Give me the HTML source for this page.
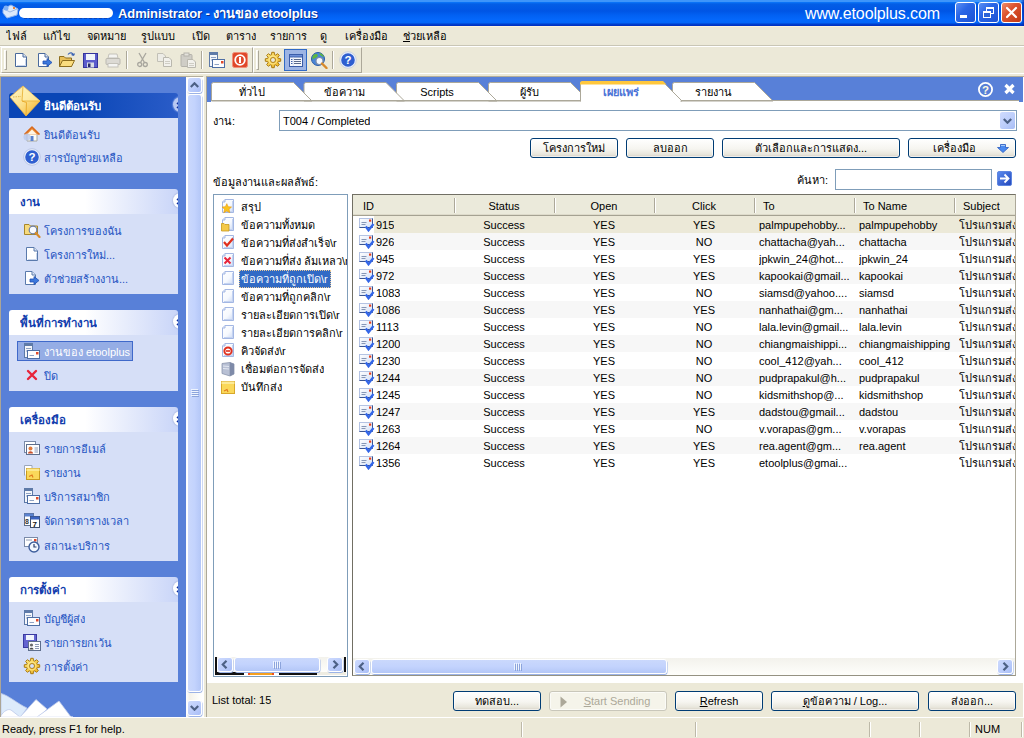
<!DOCTYPE html>
<html lang="th"><head><meta charset="utf-8"><title>Administrator - งานของ etoolplus</title>
<style>
html,body{margin:0;padding:0;}
body{width:1024px;height:738px;overflow:hidden;position:relative;background:#fff;font-family:"Liberation Sans",sans-serif;font-size:11px;color:#000;line-height:13px;}
div,span,svg{position:absolute;box-sizing:border-box;}
.t{white-space:nowrap;line-height:14px;height:14px;overflow-x:clip;overflow-y:visible;}
/* title */
#title{left:0;top:0;width:1024px;height:26px;background:linear-gradient(to bottom,#3E95FA 0,#3E95FA 1.5px,#0A72F6 2.5px,#045EE6 4px,#0055E5 11px,#0260F2 15px,#0468FC 20px,#0366F8 22.5px,#0150DE 23.6px,#0036C6 24.8px,#0030C0 26px);}
#title .cap{left:118px;top:6px;font-size:13px;font-weight:bold;color:#fff;line-height:16px;height:16px;white-space:nowrap;text-shadow:1px 1px 0 #0A2F8F;letter-spacing:-0.1px;}
#title .url{left:805px;top:4px;font-size:16px;color:#fff;line-height:19px;height:19px;white-space:nowrap;letter-spacing:-0.12px;}
.tb{top:2px;width:21px;height:21px;border:1px solid #fff;border-radius:3px;background:linear-gradient(135deg,#5C90F4 0,#2A66E6 40%,#1C52D4 100%);}
.tb.x{background:linear-gradient(135deg,#EE8E6C 0,#DC5430 40%,#C23A16 100%);}
/* menu */
#menu{left:0;top:26px;width:1024px;height:20px;background:#ECE9D8;border-top:1px solid #FBF3DD;}
#menu .t{top:2px;}
/* toolbar */
#tool{left:0;top:45px;width:1024px;height:32px;background:#ECE9D8;}
.sep{width:2px;height:18px;top:6px;border-left:1px solid #ACA899;border-right:1px solid #fff;}
.grip{width:3px;height:20px;top:5px;border-left:1px solid #fff;border-top:1px solid #fff;border-right:1px solid #ACA899;border-bottom:1px solid #ACA899;background:#F6F4EC;}
/* sidebar */
#side{left:0;top:77px;width:186px;height:640px;background:#5880D8;overflow:hidden;}
.ph{left:9px;width:169px;height:25px;background:linear-gradient(to right,#fff 0,#fff 45%,#C9D5F8 100%);border-radius:3px 3px 0 0;overflow:hidden;}
.ph .t{max-width:118px;left:11px;top:6px;font-weight:bold;color:#123DAD;font-size:11.5px;}
.pb{left:9px;width:169px;background:#D6DFF7;}
.lk{color:#1E54C2;left:35px;max-width:130px;}
.tr{}
.chev{left:164px;top:4px;width:15px;height:15px;border-radius:8px;background:#fff;box-shadow:0 0 1px 1px #B8C4E8;}
/* scroll */
.sbtn{width:15px;height:16px;border:1px solid #fff;border-radius:3px;background:linear-gradient(135deg,#CDDAFE 0,#BCCDFB 55%,#A8BDF6 100%);box-shadow:.5px 1px 0 0 #9CB3E6;}
.sbtnh{width:16px;height:15px;border:1px solid #fff;border-radius:3px;background:linear-gradient(135deg,#CDDAFE 0,#BCCDFB 55%,#A8BDF6 100%);box-shadow:.5px 1px 0 0 #9CB3E6;}
.sth{border:1px solid #fff;border-radius:3px;box-shadow:.5px 1px 0 0 #9CB3E6;}
/* main */
#main{left:207px;top:77px;width:817px;height:640px;background:#fff;overflow:hidden;}
.btn{height:20px;border:1px solid #003C74;border-radius:3px;background:linear-gradient(to bottom,#fff 0,#F6F5F0 55%,#E8E6DC 85%,#D6D0C5 100%);text-align:center;line-height:18px;white-space:nowrap;overflow:hidden;box-shadow:inset 0 0 0 1px rgba(255,255,255,.6);}
.btn.dis{border-color:#C9C7BA;background:#F5F4EA;color:#ACA899;}
.inp{border:1px solid #7F9DB9;background:#fff;}
.row{left:0;width:662px;height:17px;}
.row .c{top:2px;line-height:14px;height:14px;white-space:nowrap;overflow:hidden;}
.hd{top:0;height:21px;border-bottom:1px solid #A5A292;box-shadow:inset 0 -1px 0 #DEDBCB;}
.hs{top:3px;width:2px;height:15px;border-left:1px solid #ACA899;border-right:1px solid #fff;}
/* status */
#status{left:0;top:717px;width:1024px;height:21px;background:#ECE9D8;border-top:1px solid #fff;}
.ss{top:4px;width:2px;height:15px;border-left:1px solid #BDB9A8;border-right:1px solid #fff;}
</style></head>
<body>
<div id="title">
 <svg style="left:2px;top:4px" width="17" height="15" viewBox="0 0 17 15">
  <path d="M1 5 L9 1 L16 5 L15 11 L5 14 L1 9 Z" fill="#DCE9FB" stroke="#8FB4EE" stroke-width="1"/>
  <path d="M2 5 L8 8 L15 5" fill="none" stroke="#9CB8E6" stroke-width="1"/>
  <circle cx="4" cy="4" r="2.5" fill="#7FB0F5"/><rect x="11" y="3" width="2" height="2" fill="#E8833A"/>
 </svg>
 <div style="left:19px;top:8px;width:94px;height:10px;background:#fff;border-radius:5px"></div>
 <div style="left:24px;top:18px;width:86px;height:1px;background:repeating-linear-gradient(to right,#143A9A 0,#143A9A 3px,#0A5AE6 3px,#0A5AE6 5px);opacity:.7"></div>
 <div class="cap">Administrator - งานของ etoolplus</div>
 <div class="url">www.etoolplus.com</div>
 <div class="tb" style="left:955px"><div style="left:4px;top:12px;width:7px;height:3px;background:#fff"></div></div>
 <div class="tb" style="left:978px">
  <div style="left:7px;top:4px;width:8px;height:7px;border:1px solid #fff;border-top-width:2px"></div>
  <div style="left:4px;top:8px;width:8px;height:7px;border:1px solid #fff;border-top-width:2px;background:#2B63D8"></div>
 </div>
 <div style="left:1021px;top:0;width:3px;height:26px;background:linear-gradient(to right,rgba(0,40,170,0),rgba(0,40,170,.75))"></div>
 <div class="tb x" style="left:1001px"><svg style="left:0;top:0" width="19" height="19" viewBox="0 0 19 19"><path d="M5 5 L14 14 M14 5 L5 14" stroke="#fff" stroke-width="2.2" stroke-linecap="round"/></svg></div>
</div>
<div id="menu">
 <div class="t" style="left:6px;max-width:32px">ไฟล์</div>
 <div class="t" style="left:43px;max-width:39px">แก้ไข</div>
 <div class="t" style="left:87px;max-width:49px">จดหมาย</div>
 <div class="t" style="left:141px;max-width:46px">รูปแบบ</div>
 <div class="t" style="left:192px;max-width:29px">เปิด</div>
 <div class="t" style="left:226px;max-width:39px">ตาราง</div>
 <div class="t" style="left:270px;max-width:45px">รายการ</div>
 <div class="t" style="left:320px;max-width:20px">ดู</div>
 <div class="t" style="left:345px;max-width:53px">เครื่องมือ</div>
 <div class="t" style="left:403px;max-width:62px"><u>ช่</u>วยเหลือ</div>
</div>
<div id="tool">
 <div style="left:0;top:0;width:1024px;height:1px;background:#C9C6B6"></div>
 <div style="left:0;top:1px;width:1024px;height:1px;background:#fff"></div>
 <div style="left:1px;top:2px;width:252px;height:26px;border:1px solid #fff;border-right-color:#ACA899;border-bottom-color:#ACA899"></div>
 <div style="left:253px;top:2px;width:109px;height:26px;border:1px solid #fff;border-right-color:#ACA899;border-bottom-color:#ACA899"></div>
 <div style="left:0;top:28px;width:1024px;height:1px;background:#fff"></div>
 <div style="left:0;top:31px;width:203px;height:1px;background:#B4AE9B"></div><div style="left:206px;top:31px;width:818px;height:1px;background:#B4AE9B"></div>
 <div class="grip" style="left:4px"></div>
 <div class="grip" style="left:256px"></div>
 <!-- new -->
 <svg style="left:13px;top:7px" width="16" height="16" viewBox="0 0 16 16"><path d="M2.5 1.5 H10 L13.5 5 V14.5 H2.5 Z" fill="#fff" stroke="#4A6A9C"/><path d="M10 1.5 V5 H13.5" fill="#DDE6F5" stroke="#4A6A9C"/><path d="M4 13.5 H12.5 V7" fill="none" stroke="#C9D6EC"/></svg>
 <!-- new wizard -->
 <svg style="left:36px;top:7px" width="17" height="16" viewBox="0 0 17 16"><path d="M2.5 1.5 H9 L12.5 5 V14.5 H2.5 Z" fill="#fff" stroke="#4A6A9C"/><path d="M9 1.5 V5 H12.5" fill="#DDE6F5" stroke="#4A6A9C"/><path d="M7 9 H11 V6.5 L16 10.5 L11 14.5 V12 H7 Z" fill="#3C78DC" stroke="#1E4FB4" stroke-width=".8"/></svg>
 <!-- open -->
 <svg style="left:58px;top:6px" width="18" height="17" viewBox="0 0 18 17"><path d="M1.5 15.5 V5.5 H6 L7.5 7 H13.5 V15.5 Z" fill="#E8C05A" stroke="#8E6E1E"/><path d="M1.5 15.5 L4.5 9.5 H16.5 L13.5 15.5 Z" fill="#FBDD7E" stroke="#8E6E1E"/><path d="M10 3.5 C12 1,15 1.5,15.5 4.5 M15.5 4.5 L13.5 3.5 M15.5 4.5 L16.5 2.5" fill="none" stroke="#3C64B4" stroke-width="1.2"/></svg>
 <!-- save -->
 <svg style="left:83px;top:8px" width="15" height="15" viewBox="0 0 15 15"><rect x=".5" y=".5" width="14" height="14" fill="#5C5CCC" stroke="#34349C"/><rect x="3" y="1" width="9" height="6" fill="#F0F4FB"/><rect x="4" y="9.5" width="7" height="5" fill="#D8DCE6"/><rect x="5" y="10.5" width="2.5" height="3.5" fill="#2A2A6C"/></svg>
 <!-- print (disabled look) -->
 <svg style="left:105px;top:8px" width="16" height="15" viewBox="0 0 16 15"><path d="M4 1 H12 L13 5 H3 Z" fill="#F4F4F2" stroke="#C4C2BA"/><rect x="1" y="5.5" width="14" height="6" rx="1" fill="#DCDAD4" stroke="#BAB8B0"/><rect x="3" y="10.5" width="10" height="3.5" fill="#F4F4F2" stroke="#C4C2BA"/></svg>
 <div class="sep" style="left:126px"></div>
 <!-- cut -->
 <svg style="left:137px;top:7px" width="11" height="16" viewBox="0 0 11 16"><path d="M2 1 L7.5 10.5 M9 1 L3.5 10.5" stroke="#A8A69E" stroke-width="1.3" fill="none"/><circle cx="2.7" cy="12.5" r="2" fill="none" stroke="#A8A69E" stroke-width="1.3"/><circle cx="8.3" cy="12.5" r="2" fill="none" stroke="#A8A69E" stroke-width="1.3"/></svg>
 <!-- copy -->
 <svg style="left:156px;top:8px" width="17" height="14" viewBox="0 0 17 14"><path d="M1.5 .5 H7 L9.5 3 V8.5 H1.5 Z" fill="#EDECE6" stroke="#C2C0B6"/><path d="M7.5 4.5 H13 L15.5 7 V13.5 H7.5 Z" fill="#F2F1EC" stroke="#BAB8AE"/><path d="M9 8.5 H14 M9 10.5 H14" stroke="#CFCDC4"/></svg>
 <!-- paste -->
 <svg style="left:180px;top:7px" width="17" height="16" viewBox="0 0 17 16"><rect x="1" y="2.5" width="11" height="12" rx="1" fill="#CFCDC6" stroke="#B4B2AA"/><rect x="4" y="1" width="5" height="3" fill="#E4E2DC" stroke="#B4B2AA"/><path d="M7.5 7.5 H13 L15.5 10 V15.5 H7.5 Z" fill="#F2F1EC" stroke="#BAB8AE"/><path d="M9 11.5 H14 M9 13.5 H14" stroke="#CFCDC4"/></svg>
 <div class="sep" style="left:201px"></div>
 <!-- mail server -->
 <svg style="left:208px;top:6px" width="18" height="18" viewBox="0 0 18 18"><rect x="1.5" y="1.5" width="8" height="14" fill="#F4F6FA" stroke="#5E7AA8"/><rect x="1.5" y="1.5" width="8" height="2.5" fill="#5E7AA8"/><path d="M3 6.5 H8 M3 9 H8" stroke="#8EA2C4"/><rect x="4.500" y="8.500" width="12" height="8" fill="#FDFDFE" stroke="#4E6EA4"/><path d="M6.5 13.500 H11" stroke="#8EA2C4"/><rect x="13" y="10" width="2.500" height="2.500" fill="#E04A2A"/></svg>
 <!-- stop -->
 <svg style="left:232px;top:7px" width="16" height="16" viewBox="0 0 16 16"><rect x=".5" y=".5" width="15" height="15" rx="2" fill="#E0482A" stroke="#F0907A"/><circle cx="8" cy="8" r="4.800" fill="none" stroke="#fff" stroke-width="1.800"/><rect x="7" y="5" width="2" height="6" fill="#fff"/></svg>
 <!-- gear -->
 <svg style="left:264px;top:6px" width="18" height="18" viewBox="-9 -9 18 18"><defs><linearGradient id="gg" x1="0" y1="0" x2="1" y2="1"><stop offset="0" stop-color="#FFEE88"/><stop offset="1" stop-color="#EDB01C"/></linearGradient></defs><path d="M-1.44 -5.41 L-1.24 -7.70 L1.24 -7.70 L1.44 -5.41 L2.81 -4.84 L4.57 -6.32 L6.32 -4.57 L4.84 -2.81 L5.41 -1.44 L7.70 -1.24 L7.70 1.24 L5.41 1.44 L4.84 2.81 L6.32 4.57 L4.57 6.32 L2.81 4.84 L1.44 5.41 L1.24 7.70 L-1.24 7.70 L-1.44 5.41 L-2.81 4.84 L-4.57 6.32 L-6.32 4.57 L-4.84 2.81 L-5.41 1.44 L-7.70 1.24 L-7.70 -1.24 L-5.41 -1.44 L-4.84 -2.81 L-6.32 -4.57 L-4.57 -6.32 L-2.81 -4.84 Z" fill="url(#gg)" stroke="#A9780E" stroke-width="1" stroke-linejoin="round"/><circle r="2.500" fill="#ECE9D8" stroke="#A9780E" stroke-width=".9"/><circle r="4" fill="none" stroke="#FFF4B0" stroke-width=".8" opacity=".7"/></svg>
 <!-- list (checked) -->
 <div style="left:284px;top:4px;width:23px;height:22px;border:1px solid #316AC5;background:#9DB4E4"></div>
 <svg style="left:289px;top:9px" width="14" height="13" viewBox="0 0 14 13"><rect x=".5" y=".5" width="13" height="12" fill="#F6F8FD" stroke="#3A5CA8"/><rect x=".5" y=".5" width="13" height="2.500" fill="#6E8FD8" stroke="#3A5CA8"/><path d="M5 5.500 H12 M5 7.500 H12 M5 9.500 H12" stroke="#5A6A8C"/><path d="M2 5.500 H3.500 M2 7.500 H3.500 M2 9.500 H3.500" stroke="#3A5CA8"/><path d="M4.250 3 V12" stroke="#C4D0EA" stroke-width=".6"/></svg>
 <!-- globe search -->
 <svg style="left:310px;top:6px" width="18" height="18" viewBox="0 0 18 18"><circle cx="8" cy="8" r="6.500" fill="#4A86D8" stroke="#2A5CA8"/><path d="M4 3.500 C7 2,9 4,7 6 C5 8,3 7,2.500 9 C2 6,3 4.500,4 3.500 Z M9 2 C12 2.500,13.500 4,14 6 C12 5,10 5,9 2 Z" fill="#5EB83E"/><circle cx="9.500" cy="10" r="3.500" fill="#F4F8FE" stroke="#7A8CA8" stroke-width="1.200"/><path d="M12 12.500 L16.500 17" stroke="#D88A2A" stroke-width="2.400" stroke-linecap="round"/></svg>
 <div class="sep" style="left:332px"></div>
 <!-- help -->
 <svg style="left:339px;top:6px" width="18" height="18" viewBox="0 0 18 18"><circle cx="9" cy="9" r="7.500" fill="#2F5FD0" stroke="#E8EEFA" stroke-width="1.400"/><circle cx="9" cy="9" r="8.300" fill="none" stroke="#B8C4DC" stroke-width=".6"/><text x="9" y="13.200" font-family="Liberation Sans" font-weight="bold" font-size="11.500" fill="#fff" text-anchor="middle">?</text></svg>
</div>
<svg width="0" height="0" style="left:0;top:0"><defs>
<symbol id="i-doc" viewBox="0 0 16 16"><path d="M2.500 1.500 H10 L13.500 5 V14.500 H2.500 Z" fill="#fff" stroke="#5A7AAC"/><path d="M10 1.500 V5 H13.500" fill="#DDE6F5" stroke="#5A7AAC"/><path d="M4 13.500 H12.500 V7" fill="none" stroke="#CBD7EC"/></symbol>
<symbol id="i-docarrow" viewBox="0 0 17 16"><path d="M2.500 1.500 H9 L12.500 5 V14.500 H2.500 Z" fill="#fff" stroke="#5A7AAC"/><path d="M9 1.500 V5 H12.500" fill="#DDE6F5" stroke="#5A7AAC"/><path d="M7 9 H11 V6.500 L16 10.500 L11 14.500 V12 H7 Z" fill="#3C78DC" stroke="#1E4FB4" stroke-width=".8"/></symbol>
<symbol id="i-help" viewBox="0 0 18 18"><circle cx="9" cy="9" r="7.500" fill="#2F5FD0" stroke="#E8EEFA" stroke-width="1.400"/><circle cx="9" cy="9" r="8.300" fill="none" stroke="#A8B6D8" stroke-width=".6"/><text x="9" y="13.200" font-family="Liberation Sans" font-weight="bold" font-size="11.500" fill="#fff" text-anchor="middle">?</text></symbol>
<symbol id="i-home" viewBox="0 0 18 18"><path d="M4 9 V16 H14 V9 Z" fill="#FDFDF8" stroke="#A8A8A0"/><path d="M1.500 9.500 L9 2 L16.500 9.500" fill="#F0903C" stroke="#D86A1E" stroke-width="1.600" stroke-linejoin="round"/><path d="M4 9.500 L9 4.500 L14 9.500 Z" fill="#FFF6E6"/><rect x="7.500" y="11" width="3" height="5" fill="#5A82D0"/><circle cx="4" cy="12" r="3.500" fill="#B8C8EC" opacity=".8"/></symbol>
<symbol id="i-foldsearch" viewBox="0 0 18 16"><path d="M1.500 12.500 V2.500 H6 L7.500 4 H14.500 V12.500 Z" fill="#F6DA7E" stroke="#A8862A"/><circle cx="10" cy="8" r="3.800" fill="#F8FBFF" stroke="#6A7EA8" stroke-width="1.200"/><path d="M12.800 11 L16.500 15" stroke="#D88A2A" stroke-width="2.200" stroke-linecap="round"/></symbol>
<symbol id="i-mailsrv" viewBox="0 0 18 18"><rect x="1.500" y="1.500" width="8" height="14" fill="#F4F6FA" stroke="#5E7AA8"/><rect x="1.500" y="1.500" width="8" height="2.500" fill="#5E7AA8"/><path d="M3 6.500 H8 M3 9 H8" stroke="#8EA2C4"/><rect x="4.500" y="8.500" width="12" height="8" fill="#FDFDFE" stroke="#4E6EA4"/><path d="M6.500 13.500 H11" stroke="#8EA2C4"/><rect x="13" y="10" width="2.500" height="2.500" fill="#E04A2A"/></symbol>
<symbol id="i-x" viewBox="0 0 12 12"><path d="M2 2 L10 10 M10 2 L2 10" stroke="#E8243A" stroke-width="2.400" stroke-linecap="round"/></symbol>
<symbol id="i-card" viewBox="0 0 18 16"><rect x="1.500" y="1.500" width="11" height="11" fill="#fff" stroke="#7A8AA8"/><rect x="3.500" y="4.500" width="13" height="10" fill="#FDFDFE" stroke="#5E6E8C"/><circle cx="7.500" cy="8.500" r="2" fill="#E07A3A"/><path d="M5 13.500 C5 10.500,10 10.500,10 13.500 Z" fill="#C8502A"/><path d="M11.500 8 H15 M11.500 10 H15 M11.500 12 H15" stroke="#8E9AB4"/></symbol>
<symbol id="i-note" viewBox="0 0 18 17"><path d="M1.500 11.500 V1.500 H9 V4" fill="#fff" stroke="#9AA6BC"/><rect x="3.500" y="4.500" width="13" height="11" fill="#FAD85A" stroke="#C89A1E"/><path d="M3.500 4.500 H16.500 V7 H3.500 Z" fill="#FCE88E"/><path d="M6 12.500 L9 11 L10 13.500" fill="none" stroke="#E07A1E" stroke-width="1.200"/></symbol>
<symbol id="i-cal" viewBox="0 0 18 17"><rect x="1.500" y="1.500" width="9" height="12" fill="#fff" stroke="#5E6E8C"/><rect x="1.500" y="1.500" width="9" height="3" fill="#5A82D0"/><text x="2" y="12" font-family="Liberation Sans" font-weight="bold" font-size="7" fill="#333">8</text><rect x="7.500" y="4.500" width="9" height="11" fill="#fff" stroke="#3E4E6C"/><rect x="7.500" y="4.500" width="9" height="3" fill="#3A62C0"/><text x="9.500" y="14.500" font-family="Liberation Sans" font-weight="bold" font-size="8" fill="#111">7</text></symbol>
<symbol id="i-clock" viewBox="0 0 18 17"><rect x="1.500" y="1.500" width="13" height="9" fill="#fff" stroke="#7A8AA8"/><path d="M3 4 H9" stroke="#8E9AB4"/><rect x="11" y="3" width="2.500" height="2.500" fill="#E04A2A"/><circle cx="11" cy="11" r="5" fill="#F4F8FE" stroke="#3E5E9C" stroke-width="1.400"/><path d="M11 8 V11 H13.500" fill="none" stroke="#2A3E6C" stroke-width="1.200"/></symbol>
<symbol id="i-savecard" viewBox="0 0 18 17"><rect x=".5" y=".5" width="13" height="13" fill="#6464D0" stroke="#3A3AA0"/><rect x="3" y="1" width="8" height="5" fill="#F0F4FB"/><rect x="5.500" y="7.500" width="12" height="9" fill="#FDFDFE" stroke="#5E6E8C"/><circle cx="8.500" cy="11" r="1.600" fill="#6A6A6A"/><path d="M6.500 15.500 C6.500 13,10.500 13,10.500 15.500 Z" fill="#4A4A4A"/><path d="M12 10.500 H16 M12 12.500 H16 M12 14.500 H16" stroke="#8E9AB4"/></symbol>
<symbol id="i-gear" viewBox="-9 -9 18 18"><path d="M-1.44 -5.41 L-1.24 -7.70 L1.24 -7.70 L1.44 -5.41 L2.81 -4.84 L4.57 -6.32 L6.32 -4.57 L4.84 -2.81 L5.41 -1.44 L7.70 -1.24 L7.70 1.24 L5.41 1.44 L4.84 2.81 L6.32 4.57 L4.57 6.32 L2.81 4.84 L1.44 5.41 L1.24 7.70 L-1.24 7.70 L-1.44 5.41 L-2.81 4.84 L-4.57 6.32 L-6.32 4.57 L-4.84 2.81 L-5.41 1.44 L-7.70 1.24 L-7.70 -1.24 L-5.41 -1.44 L-4.84 -2.81 L-6.32 -4.57 L-4.57 -6.32 L-2.81 -4.84 Z" fill="url(#gg)" stroke="#A9780E" stroke-width="1" stroke-linejoin="round"/><circle r="2.500" fill="#D6DFF7" stroke="#A9780E" stroke-width=".9"/><circle r="4" fill="none" stroke="#FFF4B0" stroke-width=".8" opacity=".7"/></symbol>
<symbol id="i-chev" viewBox="0 0 15 15"><path d="M4 7 L7.500 3.800 L11 7 M4 11 L7.500 7.800 L11 11" fill="none" stroke="#0A2A9C" stroke-width="1.600"/></symbol>
</defs></svg>

<div id="side">
<div style="left:0;top:0;width:1px;height:640px;background:#ACA596"></div>
<div class="ph" style="top:16px;background:linear-gradient(to right,#0A46B6 0,#0A46B6 40%,#2A5CC8 100%)"><div class="t" style="left:35px;color:#fff">ยินดีต้อนรับ</div><div class="chev" style="background:#B9C9F2;box-shadow:0 0 1px 1px #5A82DA"><svg width="15" height="15" style="left:0;top:0"><use href="#i-chev"/></svg></div></div>
<div class="pb" style="top:41px;height:55px">
<svg style="left:14px;top:7px" width="18" height="18"><use href="#i-home"/></svg>
<div class="t lk" style="top:10px">ยินดีต้อนรับ</div>
<svg style="left:14px;top:30px" width="18" height="18"><use href="#i-help"/></svg>
<div class="t lk" style="top:33px">สารบัญช่วยเหลือ</div>
</div>
<div class="ph" style="top:112px"><div class="t">งาน</div><div class="chev"><svg width="15" height="15" style="left:0;top:0"><use href="#i-chev"/></svg></div></div>
<div class="pb" style="top:137px;height:80px">
<svg style="left:14px;top:8px" width="18" height="16"><use href="#i-foldsearch"/></svg>
<div class="t lk" style="top:10px">โครงการของฉัน</div>
<svg style="left:15px;top:32px" width="16" height="16"><use href="#i-doc"/></svg>
<div class="t lk" style="top:34px">โครงการใหม่...</div>
<svg style="left:14px;top:56px" width="17" height="16"><use href="#i-docarrow"/></svg>
<div class="t lk" style="top:58px">ตัวช่วยสร้างงาน...</div>
</div>
<div class="ph" style="top:233px"><div class="t">พื้นที่การทำงาน</div><div class="chev"><svg width="15" height="15" style="left:0;top:0"><use href="#i-chev"/></svg></div></div>
<div class="pb" style="top:258px;height:56px">
<div style="left:8px;top:6px;width:116px;height:20px;background:#95ADE5;border:1px solid #3F69CA"></div>
<svg style="left:14px;top:7px" width="18" height="18"><use href="#i-mailsrv"/></svg>
<div class="t lk" style="top:10px;color:#fff">งานของ etoolplus</div>
<svg style="left:17px;top:34px" width="12" height="12"><use href="#i-x"/></svg>
<div class="t lk" style="top:34px">ปิด</div>
</div>
<div class="ph" style="top:330px"><div class="t">เครื่องมือ</div><div class="chev"><svg width="15" height="15" style="left:0;top:0"><use href="#i-chev"/></svg></div></div>
<div class="pb" style="top:355px;height:129px">
<svg style="left:14px;top:8px" width="18" height="16"><use href="#i-card"/></svg>
<div class="t lk" style="top:10px">รายการอีเมล์</div>
<svg style="left:14px;top:32px" width="18" height="17"><use href="#i-note"/></svg>
<div class="t lk" style="top:34px">รายงาน</div>
<svg style="left:14px;top:55px" width="18" height="18"><use href="#i-mailsrv"/></svg>
<div class="t lk" style="top:58px">บริการสมาชิก</div>
<svg style="left:14px;top:80px" width="18" height="17"><use href="#i-cal"/></svg>
<div class="t lk" style="top:82px">จัดการตารางเวลา</div>
<svg style="left:14px;top:104px" width="18" height="17"><use href="#i-clock"/></svg>
<div class="t lk" style="top:107px">สถานะบริการ</div>
</div>
<div class="ph" style="top:500px"><div class="t">การตั้งค่า</div><div class="chev"><svg width="15" height="15" style="left:0;top:0"><use href="#i-chev"/></svg></div></div>
<div class="pb" style="top:525px;height:80px">
<svg style="left:14px;top:7px" width="18" height="18"><use href="#i-mailsrv"/></svg>
<div class="t lk" style="top:10px">บัญชีผู้ส่ง</div>
<svg style="left:14px;top:32px" width="18" height="17"><use href="#i-savecard"/></svg>
<div class="t lk" style="top:34px">รายการยกเว้น</div>
<svg style="left:14px;top:55px" width="18" height="18"><use href="#i-gear"/></svg>
<div class="t lk" style="top:58px">การตั้งค่า</div>
</div>
<svg style="left:9px;top:8px" width="33" height="33" viewBox="0 0 33 33"><defs><linearGradient id="env" x1="0" y1="0" x2="1" y2="1"><stop offset="0" stop-color="#FFF9D0"/><stop offset=".5" stop-color="#FCE08A"/><stop offset="1" stop-color="#F2AE1E"/></linearGradient></defs><path d="M1 12 L14 1 L31 16 L17 31 Z" fill="url(#env)" stroke="#F0B84A" stroke-width=".8"/><path d="M14 1 L13 16 L31 16" fill="#FFF4B8" fill-opacity=".55" stroke="#E8B43C" stroke-width=".9"/><path d="M13 16 L17.500 17.500 L17 31" fill="none" stroke="#E8A828" stroke-width=".9"/><path d="M4 12 L12 11.500" stroke="#D8A83C" stroke-width=".8" stroke-dasharray="1.500 1"/></svg>
<svg style="left:1px;top:612px" width="80" height="28" viewBox="0 0 80 28"><path d="M0 4.500 C7 6,17 15,26 19 L20 28 H0 Z" fill="#DDEBFB" stroke="#BCC9EA" stroke-width=".8"/><path d="M0 28 V26.500 C3 22,7 19.500,10 21 L19 28 Z" fill="#fff" stroke="#BCC9EA" stroke-width=".8"/><path d="M19 28 L35 10.500 L46 20 L38 28 Z" fill="#fff" stroke="#BCC9EA" stroke-width=".8"/><path d="M36 28 L58 12 L70 28 Z" fill="#fff" stroke="#BCC9EA" stroke-width=".8"/><rect x="0" y="27.500" width="72" height="1" fill="#fff"/></svg>
</div>
<div id="sscroll" style="left:186px;top:77px;width:17px;height:640px;background:linear-gradient(to right,#fff 0,#F4F2EA 20%,#FEFEFB 80%,#fff 100%)">
<div class="sbtn" style="left:1px;top:0px"><svg style="left:2px;top:4px" width="9" height="6" viewBox="0 0 9 6"><path d="M.8 5 L4.500 1.300 L8.200 5" fill="none" stroke="#4D6185" stroke-width="2.200"/></svg></div>
<div class="sth" style="left:1px;top:17px;width:15px;height:598px;background:linear-gradient(to right,#CAD8FC 0,#C3D3FD 50%,#B4C7F7 100%)"></div>
<svg style="left:5px;top:312px" width="8" height="9" viewBox="0 0 8 9"><path d="M0 .5 H7 M0 2.500 H7 M0 4.500 H7 M0 6.500 H7" stroke="#EEF4FE"/><path d="M1 1.500 H8 M1 3.500 H8 M1 5.500 H8 M1 7.500 H8" stroke="#8CA4DC"/></svg>
<div class="sbtn" style="left:1px;top:623px"><svg style="left:2px;top:4px" width="9" height="6" viewBox="0 0 9 6"><path d="M.8 1 L4.500 4.700 L8.200 1" fill="none" stroke="#4D6185" stroke-width="2.200"/></svg></div>
</div>
<div style="left:203px;top:77px;width:4px;height:640px;background:#ECE9D8;border-left:1px solid #fff;border-right:1px solid #ACA899"></div>
<div id="main">
<svg style="left:0;top:0" width="817" height="26" viewBox="0 0 817 26"><rect x="0" y="0" width="816" height="25" fill="#5880D8"/><rect x="4" y="24" width="808" height="2" fill="#fff"/><path d="M465.5 24 V7.5 Q465.5 5.5 467.5 5.5 H547.5 L566.0 24 Z" fill="#fff" stroke="#ACA899" stroke-width="1"/><path d="M281.5 24 V7.5 Q281.5 5.5 283.5 5.5 H363.5 L382.0 24 Z" fill="#fff" stroke="#ACA899" stroke-width="1"/><path d="M189.5 24 V7.5 Q189.5 5.5 191.5 5.5 H271.5 L290.0 24 Z" fill="#fff" stroke="#ACA899" stroke-width="1"/><path d="M97.0 24 V7.5 Q97.0 5.5 99.0 5.5 H179.0 L197.5 24 Z" fill="#fff" stroke="#ACA899" stroke-width="1"/><path d="M4.5 24 V7.5 Q4.5 5.5 6.5 5.5 H86.5 L105.0 24 Z" fill="#fff" stroke="#ACA899" stroke-width="1"/><path d="M373.5 24 V6.5 Q373.5 4.5 375.5 4.5 H455.5 L475.0 24 Z" fill="#fff" stroke="#ACA899" stroke-width="1"/><path d="M373 7.500 V6 Q373 4 375.5 4 H456 L459.500 7.500 Z" fill="#FFC73C"/><path d="M4 23.500 H373.500 M474 23.500 H812" stroke="#ACA899" stroke-width="1" fill="none"/><rect x="374" y="23" width="99.500" height="3" fill="#fff"/><circle cx="778.500" cy="12.500" r="6.600" fill="none" stroke="#fff" stroke-width="1.800"/><text x="778.600" y="16.700" font-family="Liberation Sans" font-weight="bold" font-size="11.500" fill="#FFFBE0" text-anchor="middle">?</text><path d="M798.500 8 L806.500 16 M806.500 8 L798.500 16" stroke="#fff" stroke-width="3.200"/></svg>
<div class="t" style="left:4px;top:8px;width:82px;text-align:center;">ทั่วไป</div>
<div class="t" style="left:96.5px;top:8px;width:82px;text-align:center;">ข้อความ</div>
<div class="t" style="left:189px;top:8px;width:82px;text-align:center;">Scripts</div>
<div class="t" style="left:281px;top:8px;width:82px;text-align:center;">ผู้รับ</div>
<div class="t" style="left:373px;top:8px;width:82px;text-align:center;font-weight:bold;color:#4A72D6;">เผยแพร่</div>
<div class="t" style="left:465px;top:8px;width:82px;text-align:center;">รายงาน</div>
<div class="t" style="left:6px;top:37px;max-width:60px">งาน:</div>
<div class="inp" style="left:72px;top:33px;width:738px;height:21px"><div class="t" style="left:3px;top:3px">T004 / Completed</div><div style="right:1px;top:1px;width:15px;height:17px;border-radius:2px;background:linear-gradient(135deg,#CFDBFE 0,#BDCEFB 55%,#A6BCF5 100%)"><svg style="left:3px;top:6px" width="9" height="6" viewBox="0 0 9 6"><path d="M.8 1 L4.500 4.700 L8.200 1" fill="none" stroke="#4D6185" stroke-width="2.200"/></svg></div></div>
<div class="btn" style="left:323px;top:61px;width:88px">โครงการใหม่</div>
<div class="btn" style="left:419px;top:61px;width:88px">ลบออก</div>
<div class="btn" style="left:515px;top:61px;width:178px">ตัวเลือกและการแสดง...</div>
<div class="btn" style="left:701px;top:61px;width:108px"><span style="left:0;top:0;width:90px;text-align:center">เครื่องมือ</span><svg style="left:88px;top:5px" width="12" height="9" viewBox="0 0 12 9"><path d="M3.500 .5 H8.500 V3.500 H11.500 L6 8.500 L.5 3.500 H3.500 Z" fill="#4A8AF0" stroke="#2A5CC0" stroke-width=".8"/><path d="M4 1 H8 V2 H4 Z" fill="#A8CCFA"/></svg></div>
<div class="t" style="left:6px;top:98px;max-width:200px">ข้อมูลงานและผลลัพธ์:</div>
<div class="t" style="left:590px;top:96px;max-width:36px">ค้นหา:</div>
<div class="inp" style="left:628px;top:92px;width:157px;height:21px"></div>
<svg style="left:790px;top:94px" width="15" height="15" viewBox="0 0 15 15"><defs><linearGradient id="gb" x1="0" y1="0" x2="1" y2="1"><stop offset="0" stop-color="#5C8CF0"/><stop offset="1" stop-color="#2246BA"/></linearGradient></defs><rect x=".5" y=".5" width="14" height="14" rx="1.500" fill="url(#gb)" stroke="#5F86E0"/><path d="M3 7.500 H11 M7.500 3.500 L11.500 7.500 L7.500 11.500" fill="none" stroke="#fff" stroke-width="1.800"/></svg>
<div class="inp" style="left:6px;top:117px;width:135px;height:483px;overflow:hidden">
<svg width="0" height="0" style="left:0;top:0"><defs>
<linearGradient id="dg" x1="0" y1="0" x2="1" y2="1"><stop offset="0" stop-color="#fff"/><stop offset=".55" stop-color="#F6F9FE"/><stop offset="1" stop-color="#C9D7F4"/></linearGradient><symbol id="t-doc" viewBox="0 0 14 16"><path d="M4 1.500 H12.500 V14.500 H1.500 V4 Z" fill="url(#dg)" stroke="#A3B7E3"/><path d="M1.500 4 H4 V1.500" fill="#E4ECFA" stroke="#A3B7E3"/><path d="M3 13.500 H11.500 V3" fill="none" stroke="#C4D3F1"/></symbol>
</defs></svg>
<svg style="left:7px;top:3px" width="14" height="16" viewBox="0 0 14 16"><use href="#t-doc"/><path d="M5 4.500 L6.600 8 L10.500 8.400 L7.600 11 L8.500 15 L5 13 L1.500 15 L2.400 11 L-.5 8.400 L3.400 8 Z" fill="#FAC31E" stroke="#E89A10" stroke-width=".7" transform="translate(1.500,1.800) scale(.86)"/></svg>
<div class="t tr" style="left:27px;top:5px">สรุป</div>
<svg style="left:7px;top:21px" width="14" height="16" viewBox="0 0 14 16"><use href="#t-doc"/><path d="M.5 15 V7.500 H3 L4 8.500 H8 V15 Z" fill="#F4C94A" stroke="#C89A1E" stroke-width=".8"/></svg>
<div class="t tr" style="left:27px;top:23px">ข้อความทั้งหมด</div>
<svg style="left:7px;top:39px" width="14" height="16" viewBox="0 0 14 16"><use href="#t-doc"/><path d="M3 8 L6 11.500 L12 4.500" fill="none" stroke="#E0301E" stroke-width="2.200"/></svg>
<div class="t tr" style="left:27px;top:41px">ข้อความที่ส่งสำเร็จ\r</div>
<svg style="left:7px;top:57px" width="14" height="16" viewBox="0 0 14 16"><use href="#t-doc"/><path d="M3.500 5.500 L9.500 11.500 M9.500 5.500 L3.500 11.500" stroke="#E8243A" stroke-width="2"/></svg>
<div class="t tr" style="left:27px;top:59px">ข้อความที่ส่ง ล้มเหลว\r</div>
<svg style="left:7px;top:75px" width="14" height="16" viewBox="0 0 14 16"><use href="#t-doc"/></svg>
<div style="left:25px;top:75px;width:92px;height:18px;background:#316AC5;border:1px dotted #E8C898"></div>
<div class="t tr" style="left:27px;top:77px;color:#fff">ข้อความที่ถูกเปิด\r</div>
<svg style="left:7px;top:93px" width="14" height="16" viewBox="0 0 14 16"><use href="#t-doc"/></svg>
<div class="t tr" style="left:27px;top:95px">ข้อความที่ถูกคลิก\r</div>
<svg style="left:7px;top:111px" width="14" height="16" viewBox="0 0 14 16"><use href="#t-doc"/></svg>
<div class="t tr" style="left:27px;top:113px">รายละเอียดการเปิด\r</div>
<svg style="left:7px;top:129px" width="14" height="16" viewBox="0 0 14 16"><use href="#t-doc"/></svg>
<div class="t tr" style="left:27px;top:131px">รายละเอียดการคลิก\r</div>
<svg style="left:7px;top:147px" width="14" height="16" viewBox="0 0 14 16"><use href="#t-doc"/><circle cx="7" cy="9" r="3.600" fill="#fff" stroke="#E0301E" stroke-width="2"/><rect x="5" y="8.200" width="4" height="1.600" fill="#E0301E"/></svg>
<div class="t tr" style="left:27px;top:149px">คิวจัดส่ง\r</div>
<svg style="left:6px;top:166px" width="16" height="16" viewBox="0 0 16 16"><path d="M2 2.500 L10 1.500 L14 3 V13 L10 15 L2 12.500 Z" fill="#B8C0D4" stroke="#8A94AC" stroke-width=".8"/><path d="M10 1.500 V15" stroke="#8A94AC" stroke-width=".8"/><path d="M3 5 L9 5.500 M3 7.500 L9 8" stroke="#E4E8F2"/><path d="M10 1.500 L14 3 V13 L10 15 Z" fill="#7E8AA8"/></svg>
<div class="t tr" style="left:27px;top:167px">เชื่อมต่อการจัดส่ง</div>
<svg style="left:6px;top:184px" width="16" height="16" viewBox="0 0 16 16"><rect x="1.500" y="2.500" width="13" height="12" fill="#FAD85A" stroke="#D8A82A"/><path d="M1.500 2.500 H14.500 V5 H1.500 Z" fill="#FCEA96"/><path d="M4 12 L7 10.500 L8 13" fill="none" stroke="#E07A1E" stroke-width="1.100"/></svg>
<div class="t tr" style="left:27px;top:185px">บันทึกส่ง</div>
<div style="left:1px;top:462px;width:131px;height:18px;background:#111"></div>
<div style="left:3px;top:462px;width:127px;height:15px;background:linear-gradient(to bottom,#F3F2EC,#FEFEFB)"></div>
<div style="left:30px;top:478px;width:4px;height:2px;background:#fff"></div><div style="left:34px;top:478px;width:26px;height:2px;background:#F5A01E;border-left:2px solid #F0501E;border-right:2px solid #F0501E"></div><div style="left:60px;top:478px;width:5px;height:2px;background:#fff"></div><div style="left:103px;top:477px;width:29px;height:3px;background:#EEECE2"></div>
<div class="sbtnh" style="left:3px;top:462px"><svg style="left:3px;top:2px" width="7" height="9" viewBox="0 0 7 9"><path d="M5.500 .8 L1.800 4.500 L5.500 8.200" fill="none" stroke="#4D6185" stroke-width="2.200"/></svg></div>
<div class="sth" style="left:20px;top:462px;width:86px;height:15px;background:linear-gradient(to bottom,#CAD8FC 0,#C3D3FD 50%,#B4C7F7 100%)"></div>
<svg style="left:59px;top:466px" width="9" height="8" viewBox="0 0 9 8"><path d="M.5 0 V7 M2.500 0 V7 M4.500 0 V7 M6.500 0 V7" stroke="#EEF4FE"/><path d="M1.500 1 V8 M3.500 1 V8 M5.500 1 V8 M7.500 1 V8" stroke="#8CA4DC"/></svg>
<div class="sbtnh" style="left:113px;top:462px"><svg style="left:4px;top:2px" width="7" height="9" viewBox="0 0 7 9"><path d="M1.500 .8 L5.200 4.500 L1.500 8.200" fill="none" stroke="#4D6185" stroke-width="2.200"/></svg></div>
</div>
<div id="list" style="left:145px;top:117px;width:664px;height:482px;border:1px solid #ACA899;border-top-color:#716F64;border-left-color:#716F64;border-bottom-color:#959282;background:#fff;overflow:hidden">
<svg width="0" height="0" style="left:0;top:0"><defs><symbol id="l-ic" viewBox="0 0 16 15"><linearGradient id="lg" x1="0" y1="0" x2="1" y2="1"><stop offset="0" stop-color="#fff"/><stop offset="1" stop-color="#D4E0F6"/></linearGradient><rect x=".5" y="1.500" width="13" height="9" fill="url(#lg)" stroke="#B4C3E3"/><path d="M.5 10.500 H13.500 V1.500" fill="none" stroke="#3A5592"/><path d="M2.500 5.500 H7.500 M2.500 7.500 H6.500" stroke="#8797B6"/><rect x="10" y="2.500" width="2.200" height="2.200" fill="#E8401E"/><path d="M6.800 9.500 L9.500 13.300 L14.500 7" fill="none" stroke="#3366E8" stroke-width="2.300"/></symbol></defs></svg>
<div class="hd" style="left:0;width:663px;background:#EBEADB"></div>
<div class="t" style="left:10px;top:4px">ID</div>
<div class="t" style="left:101px;top:4px;width:100px;text-align:center">Status</div>
<div class="hs" style="left:101px"></div>
<div class="t" style="left:201px;top:4px;width:100px;text-align:center">Open</div>
<div class="hs" style="left:201px"></div>
<div class="t" style="left:301px;top:4px;width:100px;text-align:center">Click</div>
<div class="hs" style="left:301px"></div>
<div class="t" style="left:410px;top:4px">To</div>
<div class="hs" style="left:401px"></div>
<div class="t" style="left:510px;top:4px">To Name</div>
<div class="hs" style="left:501px"></div>
<div class="t" style="left:610px;top:4px">Subject</div>
<div class="hs" style="left:601px"></div>
<div class="row" style="top:21px">
<div style="left:21px;top:0;width:642px;height:17px;background:#ECE9D8"></div>
<svg style="left:6px;top:1px" width="16" height="15"><use href="#l-ic"/></svg>
<div class="c" style="left:23px">915</div>
<div class="c" style="left:101px;width:100px;text-align:center">Success</div>
<div class="c" style="left:201px;width:100px;text-align:center">YES</div>
<div class="c" style="left:301px;width:100px;text-align:center">YES</div>
<div class="c" style="left:406px;width:94px">palmpupehobby...</div>
<div class="c" style="left:506px;width:94px">palmpupehobby</div>
<div class="c" style="left:606px;width:57px">โปรแกรมส่งอีเมล์</div>
</div>
<div class="row" style="top:38px">
<div style="left:21px;top:0;width:642px;height:17px;background:#F7F7F7"></div>
<svg style="left:6px;top:1px" width="16" height="15"><use href="#l-ic"/></svg>
<div class="c" style="left:23px">926</div>
<div class="c" style="left:101px;width:100px;text-align:center">Success</div>
<div class="c" style="left:201px;width:100px;text-align:center">YES</div>
<div class="c" style="left:301px;width:100px;text-align:center">NO</div>
<div class="c" style="left:406px;width:94px">chattacha@yah...</div>
<div class="c" style="left:506px;width:94px">chattacha</div>
<div class="c" style="left:606px;width:57px">โปรแกรมส่งอีเมล์</div>
</div>
<div class="row" style="top:55px">
<div style="left:21px;top:0;width:642px;height:17px;background:#fff"></div>
<svg style="left:6px;top:1px" width="16" height="15"><use href="#l-ic"/></svg>
<div class="c" style="left:23px">945</div>
<div class="c" style="left:101px;width:100px;text-align:center">Success</div>
<div class="c" style="left:201px;width:100px;text-align:center">YES</div>
<div class="c" style="left:301px;width:100px;text-align:center">YES</div>
<div class="c" style="left:406px;width:94px">jpkwin_24@hot...</div>
<div class="c" style="left:506px;width:94px">jpkwin_24</div>
<div class="c" style="left:606px;width:57px">โปรแกรมส่งอีเมล์</div>
</div>
<div class="row" style="top:72px">
<div style="left:21px;top:0;width:642px;height:17px;background:#F7F7F7"></div>
<svg style="left:6px;top:1px" width="16" height="15"><use href="#l-ic"/></svg>
<div class="c" style="left:23px">972</div>
<div class="c" style="left:101px;width:100px;text-align:center">Success</div>
<div class="c" style="left:201px;width:100px;text-align:center">YES</div>
<div class="c" style="left:301px;width:100px;text-align:center">YES</div>
<div class="c" style="left:406px;width:94px">kapookai@gmail...</div>
<div class="c" style="left:506px;width:94px">kapookai</div>
<div class="c" style="left:606px;width:57px">โปรแกรมส่งอีเมล์</div>
</div>
<div class="row" style="top:89px">
<div style="left:21px;top:0;width:642px;height:17px;background:#fff"></div>
<svg style="left:6px;top:1px" width="16" height="15"><use href="#l-ic"/></svg>
<div class="c" style="left:23px">1083</div>
<div class="c" style="left:101px;width:100px;text-align:center">Success</div>
<div class="c" style="left:201px;width:100px;text-align:center">YES</div>
<div class="c" style="left:301px;width:100px;text-align:center">NO</div>
<div class="c" style="left:406px;width:94px">siamsd@yahoo....</div>
<div class="c" style="left:506px;width:94px">siamsd</div>
<div class="c" style="left:606px;width:57px">โปรแกรมส่งอีเมล์</div>
</div>
<div class="row" style="top:106px">
<div style="left:21px;top:0;width:642px;height:17px;background:#F7F7F7"></div>
<svg style="left:6px;top:1px" width="16" height="15"><use href="#l-ic"/></svg>
<div class="c" style="left:23px">1086</div>
<div class="c" style="left:101px;width:100px;text-align:center">Success</div>
<div class="c" style="left:201px;width:100px;text-align:center">YES</div>
<div class="c" style="left:301px;width:100px;text-align:center">YES</div>
<div class="c" style="left:406px;width:94px">nanhathai@gm...</div>
<div class="c" style="left:506px;width:94px">nanhathai</div>
<div class="c" style="left:606px;width:57px">โปรแกรมส่งอีเมล์</div>
</div>
<div class="row" style="top:123px">
<div style="left:21px;top:0;width:642px;height:17px;background:#fff"></div>
<svg style="left:6px;top:1px" width="16" height="15"><use href="#l-ic"/></svg>
<div class="c" style="left:23px">1113</div>
<div class="c" style="left:101px;width:100px;text-align:center">Success</div>
<div class="c" style="left:201px;width:100px;text-align:center">YES</div>
<div class="c" style="left:301px;width:100px;text-align:center">NO</div>
<div class="c" style="left:406px;width:94px">lala.levin@gmail...</div>
<div class="c" style="left:506px;width:94px">lala.levin</div>
<div class="c" style="left:606px;width:57px">โปรแกรมส่งอีเมล์</div>
</div>
<div class="row" style="top:140px">
<div style="left:21px;top:0;width:642px;height:17px;background:#F7F7F7"></div>
<svg style="left:6px;top:1px" width="16" height="15"><use href="#l-ic"/></svg>
<div class="c" style="left:23px">1200</div>
<div class="c" style="left:101px;width:100px;text-align:center">Success</div>
<div class="c" style="left:201px;width:100px;text-align:center">YES</div>
<div class="c" style="left:301px;width:100px;text-align:center">NO</div>
<div class="c" style="left:406px;width:94px">chiangmaishippi...</div>
<div class="c" style="left:506px;width:94px">chiangmaishipping</div>
<div class="c" style="left:606px;width:57px">โปรแกรมส่งอีเมล์</div>
</div>
<div class="row" style="top:157px">
<div style="left:21px;top:0;width:642px;height:17px;background:#fff"></div>
<svg style="left:6px;top:1px" width="16" height="15"><use href="#l-ic"/></svg>
<div class="c" style="left:23px">1230</div>
<div class="c" style="left:101px;width:100px;text-align:center">Success</div>
<div class="c" style="left:201px;width:100px;text-align:center">YES</div>
<div class="c" style="left:301px;width:100px;text-align:center">NO</div>
<div class="c" style="left:406px;width:94px">cool_412@yah...</div>
<div class="c" style="left:506px;width:94px">cool_412</div>
<div class="c" style="left:606px;width:57px">โปรแกรมส่งอีเมล์</div>
</div>
<div class="row" style="top:174px">
<div style="left:21px;top:0;width:642px;height:17px;background:#F7F7F7"></div>
<svg style="left:6px;top:1px" width="16" height="15"><use href="#l-ic"/></svg>
<div class="c" style="left:23px">1244</div>
<div class="c" style="left:101px;width:100px;text-align:center">Success</div>
<div class="c" style="left:201px;width:100px;text-align:center">YES</div>
<div class="c" style="left:301px;width:100px;text-align:center">NO</div>
<div class="c" style="left:406px;width:94px">pudprapakul@h...</div>
<div class="c" style="left:506px;width:94px">pudprapakul</div>
<div class="c" style="left:606px;width:57px">โปรแกรมส่งอีเมล์</div>
</div>
<div class="row" style="top:191px">
<div style="left:21px;top:0;width:642px;height:17px;background:#fff"></div>
<svg style="left:6px;top:1px" width="16" height="15"><use href="#l-ic"/></svg>
<div class="c" style="left:23px">1245</div>
<div class="c" style="left:101px;width:100px;text-align:center">Success</div>
<div class="c" style="left:201px;width:100px;text-align:center">YES</div>
<div class="c" style="left:301px;width:100px;text-align:center">NO</div>
<div class="c" style="left:406px;width:94px">kidsmithshop@...</div>
<div class="c" style="left:506px;width:94px">kidsmithshop</div>
<div class="c" style="left:606px;width:57px">โปรแกรมส่งอีเมล์</div>
</div>
<div class="row" style="top:208px">
<div style="left:21px;top:0;width:642px;height:17px;background:#F7F7F7"></div>
<svg style="left:6px;top:1px" width="16" height="15"><use href="#l-ic"/></svg>
<div class="c" style="left:23px">1247</div>
<div class="c" style="left:101px;width:100px;text-align:center">Success</div>
<div class="c" style="left:201px;width:100px;text-align:center">YES</div>
<div class="c" style="left:301px;width:100px;text-align:center">YES</div>
<div class="c" style="left:406px;width:94px">dadstou@gmail...</div>
<div class="c" style="left:506px;width:94px">dadstou</div>
<div class="c" style="left:606px;width:57px">โปรแกรมส่งอีเมล์</div>
</div>
<div class="row" style="top:225px">
<div style="left:21px;top:0;width:642px;height:17px;background:#fff"></div>
<svg style="left:6px;top:1px" width="16" height="15"><use href="#l-ic"/></svg>
<div class="c" style="left:23px">1263</div>
<div class="c" style="left:101px;width:100px;text-align:center">Success</div>
<div class="c" style="left:201px;width:100px;text-align:center">YES</div>
<div class="c" style="left:301px;width:100px;text-align:center">NO</div>
<div class="c" style="left:406px;width:94px">v.vorapas@gm...</div>
<div class="c" style="left:506px;width:94px">v.vorapas</div>
<div class="c" style="left:606px;width:57px">โปรแกรมส่งอีเมล์</div>
</div>
<div class="row" style="top:242px">
<div style="left:21px;top:0;width:642px;height:17px;background:#F7F7F7"></div>
<svg style="left:6px;top:1px" width="16" height="15"><use href="#l-ic"/></svg>
<div class="c" style="left:23px">1264</div>
<div class="c" style="left:101px;width:100px;text-align:center">Success</div>
<div class="c" style="left:201px;width:100px;text-align:center">YES</div>
<div class="c" style="left:301px;width:100px;text-align:center">YES</div>
<div class="c" style="left:406px;width:94px">rea.agent@gm...</div>
<div class="c" style="left:506px;width:94px">rea.agent</div>
<div class="c" style="left:606px;width:57px">โปรแกรมส่งอีเมล์</div>
</div>
<div class="row" style="top:259px">
<div style="left:21px;top:0;width:642px;height:17px;background:#fff"></div>
<svg style="left:6px;top:1px" width="16" height="15"><use href="#l-ic"/></svg>
<div class="c" style="left:23px">1356</div>
<div class="c" style="left:101px;width:100px;text-align:center">Success</div>
<div class="c" style="left:201px;width:100px;text-align:center">YES</div>
<div class="c" style="left:301px;width:100px;text-align:center">YES</div>
<div class="c" style="left:406px;width:94px">etoolplus@gmai...</div>
<div class="c" style="left:506px;width:94px"></div>
<div class="c" style="left:606px;width:57px">โปรแกรมส่งอีเมล์</div>
</div>
<div style="left:0;top:463px;width:663px;height:17px;background:linear-gradient(to bottom,#F3F2EC,#FEFEFB)"></div>
<div class="sbtnh" style="left:1px;top:464px"><svg style="left:3px;top:2px" width="7" height="9" viewBox="0 0 7 9"><path d="M5.500 .8 L1.800 4.500 L5.500 8.200" fill="none" stroke="#4D6185" stroke-width="2.200"/></svg></div>
<div style="left:18px;top:464px;width:296px;height:15px;background:linear-gradient(to bottom,#CAD8FC 0,#C3D3FD 50%,#B4C7F7 100%)" class="sth"></div>
<svg style="left:161px;top:468px" width="9" height="8" viewBox="0 0 9 8"><path d="M.5 0 V7 M2.500 0 V7 M4.500 0 V7 M6.500 0 V7" stroke="#EEF4FE"/><path d="M1.500 1 V8 M3.500 1 V8 M5.500 1 V8 M7.500 1 V8" stroke="#8CA4DC"/></svg>
<div class="sbtnh" style="left:644px;top:464px"><svg style="left:4px;top:2px" width="7" height="9" viewBox="0 0 7 9"><path d="M1.500 .8 L5.200 4.500 L1.500 8.200" fill="none" stroke="#4D6185" stroke-width="2.200"/></svg></div>
</div>
<div style="left:0;top:606px;width:816px;height:34px;background:#ECE9D8"></div>
<div class="t" style="left:5px;top:616px">List total: 15</div>
<div class="btn" style="left:246px;top:614px;width:88px">ทดสอบ...</div>
<div class="btn dis" style="left:342px;top:614px;width:118px"><svg style="left:10px;top:4px" width="8" height="12" viewBox="0 0 8 12"><path d="M.5 .5 L7 6 L.5 11.500 Z" fill="#ACA899"/></svg><span style="left:18px;top:0;width:98px;text-align:center"><u>S</u>tart Sending</span></div>
<div class="btn" style="left:468px;top:614px;width:88px"><u>R</u>efresh</div>
<div class="btn" style="left:564px;top:614px;width:148px"><u>ดู</u>ข้อความ / Log...</div>
<div class="btn" style="left:721px;top:614px;width:88px">ส่งออก...</div>
</div><div id="status">
<div class="t" style="left:2px;top:4px">Ready, press F1 for help.</div>
<div class="ss" style="left:521px"></div><div class="ss" style="left:695px"></div><div class="ss" style="left:869px"></div><div class="ss" style="left:919px"></div><div class="ss" style="left:969px"></div><div class="ss" style="left:1021px"></div>
<div class="t" style="left:975px;top:4px">NUM</div>
</div>
</body></html>
